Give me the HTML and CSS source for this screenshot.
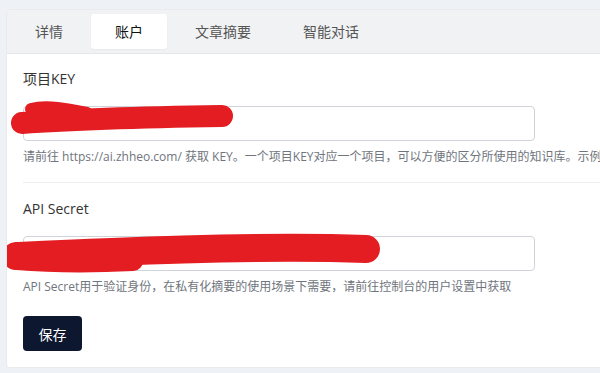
FILE: index.html
```html
<!DOCTYPE html>
<html lang="zh-CN">
<head>
    <meta charset="UTF-8">
    <meta name="viewport" content="width=device-width, initial-scale=1.0">
    <title>账户设置</title>
    <link rel="stylesheet" href="styles.css">
</head>
<body>
<div class="page">
    <div class="card">
        <div class="tabs">
            <div class="tab">详情</div>
            <div class="tab active">账户</div>
            <div class="tab">文章摘要</div>
            <div class="tab">智能对话</div>
        </div>
        <div class="content">
            <div class="form-group">
                <label for="projectKey">项目KEY</label>
                <div class="field">
                    <input type="text" id="projectKey">
                    <svg class="scribble scribble-key" width="240" height="50" viewBox="0 0 240 50">
                        <path d="M 15 25 C 70 21, 150 19, 215 18" fill="none" stroke="#e31d21" stroke-width="22" stroke-linecap="round"/>
                        <path d="M 24 11 C 40 7, 60 11, 80 15" fill="none" stroke="#e31d21" stroke-width="12" stroke-linecap="round"/>
                    </svg>
                </div>
                <p class="hint">请前往 https://ai.zhheo.com/ 获取 KEY。一个项目KEY对应一个项目，可以方便的区分所使用的知识库。示例</p>
            </div>
            <div class="divider"></div>
            <div class="form-group">
                <label for="apiSecret">API Secret</label>
                <div class="field">
                    <input type="password" id="apiSecret">
                    <svg class="scribble scribble-secret" width="400" height="50" viewBox="0 0 400 50">
                        <path d="M 13 23 C 100 19, 250 12, 363 16" fill="none" stroke="#e31d21" stroke-width="28" stroke-linecap="round"/>
                        <path d="M 14 27 C 50 30, 90 30, 130 28" fill="none" stroke="#e31d21" stroke-width="20" stroke-linecap="round"/>
                    </svg>
                </div>
                <p class="hint">API Secret用于验证身份，在私有化摘要的使用场景下需要，请前往控制台的用户设置中获取</p>
            </div>
            <button type="button">保存</button>
        </div>
    </div>
</div>
</body>
</html>
```

FILE: styles.css
```css
body {
    margin: 0;
    padding: 0;
    background-color: #eef2f7;
    font-family: 'Open Sans', 'Noto Sans CJK SC', sans-serif;
    overflow: hidden;
}

.page {
    padding: 9px 0 0 6px;
}

.card {
    width: 640px;
    background: #fff;
    border: 1px solid #e8eaee;
    border-radius: 4px;
    overflow: hidden;
}

.tabs {
    display: flex;
    gap: 4px;
    padding: 4px 4px;
    background-color: #f1f2f4;
    border-bottom: 1px solid #e5e7eb;
}

.tab {
    height: 35px;
    line-height: 35px;
    padding: 0 24px;
    font-size: 14px;
    color: #555;
    border-radius: 3px;
}

.tab.active {
    background: #fff;
    color: #111;
    box-shadow: 0 1px 2px rgba(0, 0, 0, 0.04);
}

.content {
    padding: 15px 0 16px 16px;
}

.form-group label {
    display: block;
    font-size: 14px;
    line-height: 20px;
    color: #333;
    margin-bottom: 17px;
}

.field {
    position: relative;
}

input {
    display: block;
    width: 512px;
    height: 35px;
    box-sizing: border-box;
    border: 1px solid #d1d3da;
    border-radius: 4px;
    padding: 0 10px;
    font-size: 14px;
}

.scribble {
    position: absolute;
    pointer-events: none;
}

.scribble-key {
    left: -16px;
    top: -8px;
}

.scribble-secret {
    left: -20px;
    top: -3px;
}

.hint {
    margin: 7px 0 0;
    font-size: 12px;
    line-height: 18px;
    color: #70757d;
    white-space: nowrap;
}

.divider {
    height: 1px;
    background: #eceef1;
    margin: 16px 0 16px;
}

button {
    margin-top: 20px;
    width: 59px;
    height: 35px;
    background-color: #0e1730;
    color: #fff;
    border: none;
    border-radius: 4px;
    font-size: 14px;
    font-family: inherit;
    cursor: pointer;
}
```
